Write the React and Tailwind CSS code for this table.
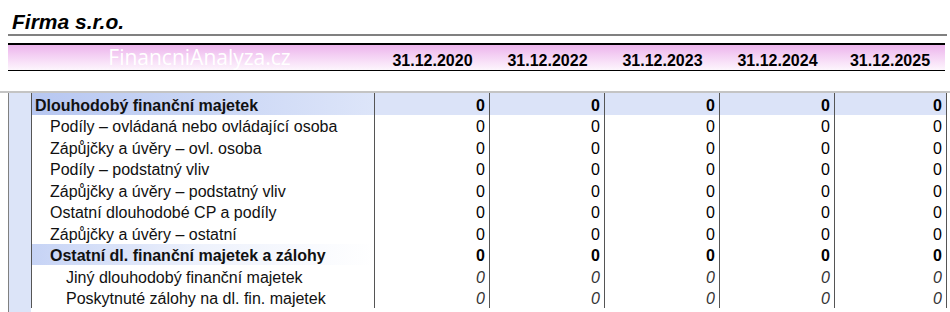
import React from "react";

const years = ["31.12.2020", "31.12.2022", "31.12.2023", "31.12.2024", "31.12.2025"];

const rows = [
  { label: "Dlouhodobý finanční majetek", kind: "total" },
  { label: "Podíly – ovládaná nebo ovládající osoba", kind: "item" },
  { label: "Zápůjčky a úvěry – ovl. osoba", kind: "item" },
  { label: "Podíly – podstatný vliv", kind: "item" },
  { label: "Zápůjčky a úvěry – podstatný vliv", kind: "item" },
  { label: "Ostatní dlouhodobé CP a podíly", kind: "item" },
  { label: "Zápůjčky a úvěry – ostatní", kind: "item" },
  { label: "Ostatní dl. finanční majetek a zálohy", kind: "sub" },
  { label: "Jiný dlouhodobý finanční majetek", kind: "detail" },
  { label: "Poskytnuté zálohy na dl. fin. majetek", kind: "detail" },
];

const labelStyles = {
  total: "pl-[3px] font-bold bg-gradient-to-r from-[#b7c7f1] to-[#dde5f9]",
  item: "pl-[18px]",
  sub: "pl-[18px] font-bold bg-gradient-to-r from-[#c6d3f5] via-[#eef2fc] to-white",
  detail: "pl-[34px]",
};

const valueStyles = {
  total: "font-bold bg-[#dbe3f8] text-black",
  item: "text-black",
  sub: "font-bold text-black",
  detail: "italic text-[#333]",
};

function Row({ label, kind }) {
  return (
    <div className="grid grid-cols-[344px_115px_115px_115px_115px_112px] h-[21.5px]">
      <div
        className={`flex items-end border-l border-r border-[#555] text-[#111] whitespace-nowrap overflow-hidden ${labelStyles[kind]}`}
      >
        <span className="leading-[18px]">{label}</span>
      </div>
      {years.map((y) => (
        <div
          key={y}
          className={`flex items-end justify-end pr-[4px] border-r border-[#555] ${valueStyles[kind]}`}
        >
          <span className="leading-[18px]">0</span>
        </div>
      ))}
    </div>
  );
}

export default function App() {
  return (
    <div
      className="w-[950px] h-[312px] bg-white overflow-hidden text-[16px] text-black"
      style={{ fontFamily: '"Liberation Sans", Arial, sans-serif' }}
    >
      <div className="h-[34px] pl-[12px] pt-[12px]">
        <h1 className="text-[21px] leading-[20px] font-bold italic text-black">
          Firma s.r.o.
        </h1>
      </div>
      <div className="ml-[8px] w-[939px] border-t-2 border-[#808080] h-[9px]" />

      <div className="ml-[8px] w-[937px] h-[28px] border-t-2 border-b border-black bg-gradient-to-b from-[#ecb4ec] to-[#fdf6fd] grid grid-cols-[367px_115px_115px_115px_115px_110px]">
        <div className="flex items-start justify-center pl-[16px]">
          <span
            className="text-white text-[21px] leading-[24px] font-normal"
            style={{ fontFamily: '"Open Sans", "Noto Sans", sans-serif' }}
          >
            FinancniAnalyza.cz
          </span>
        </div>
        {years.map((y) => (
          <div key={y} className="flex items-end justify-center">
            <span className="font-bold leading-[18px]">{y}</span>
          </div>
        ))}
      </div>

      <div className="h-[20px]" />

      <div className="border-t-2 border-[#c4c4c4] flex">
        <div className="w-[8px]" />
        <div className="w-[23px] h-[230px] border-l border-[#808080] bg-[#dce4f8]" />
        <div className="flex flex-col">
          {rows.map((r) => (
            <Row key={r.label} {...r} />
          ))}
        </div>
      </div>
    </div>
  );
}
